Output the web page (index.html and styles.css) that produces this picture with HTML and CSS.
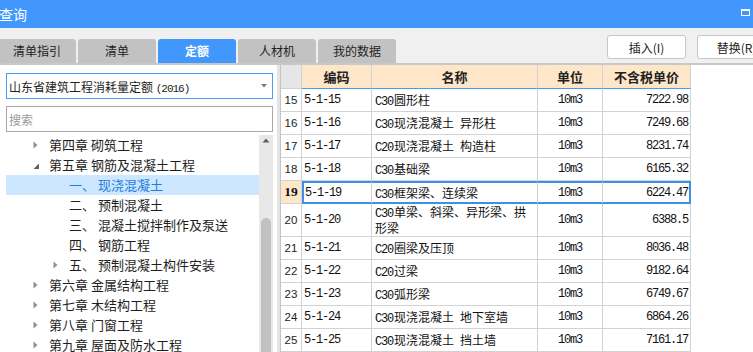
FILE: index.html
```html
<!DOCTYPE html>
<html lang="zh-CN">
<head>
<meta charset="utf-8">
<title>查询</title>
<link rel="stylesheet" href="styles.css">
</head>
<body>
<div class="window">
  <header class="titlebar">
    <span class="title">查询</span>
    <span class="max-icon"></span>
  </header>

  <div class="toolbar">
    <nav class="tabs">
      <span class="tab">清单指引</span>
      <span class="tab">清单</span>
      <span class="tab active">定额</span>
      <span class="tab">人材机</span>
      <span class="tab">我的数据</span>
    </nav>
    <div class="actions">
      <button class="btn">插入(I)</button>
      <button class="btn">替换(R)</button>
    </div>
  </div>

  <main class="content">
    <aside class="sidebar">
      <div class="select">
        <span>山东省建筑工程消耗量定额 <span class="mono small">(2016)</span></span>
        <svg class="caret" width="6" height="4" viewBox="0 0 6 4"><path d="M0 0H6L3 3.5Z" fill="#7d7d7d"/></svg>
      </div>
      <div class="search">搜索</div>
      <div class="tree-wrap">
        <ul class="tree">
          <li class="l1"><span class="tw"><svg width="5" height="8" viewBox="0 0 5 8"><path d="M0.5 0.5L4.5 4L0.5 7.5Z" fill="#8f8f8f"/></svg></span>第四章&nbsp;砌筑工程</li>
          <li class="l1"><span class="tw tw-open"><svg width="7" height="7" viewBox="0 0 7 7"><path d="M6 0.5V6H0.5Z" fill="#5e5e5e"/></svg></span>第五章&nbsp;钢筋及混凝土工程</li>
          <li class="l2 selected"><span class="tw"></span>一、&nbsp;现浇混凝土</li>
          <li class="l2"><span class="tw"></span>二、&nbsp;预制混凝土</li>
          <li class="l2"><span class="tw"></span>三、&nbsp;混凝土搅拌制作及泵送</li>
          <li class="l2"><span class="tw"></span>四、&nbsp;钢筋工程</li>
          <li class="l2"><span class="tw"><svg width="5" height="8" viewBox="0 0 5 8"><path d="M0.5 0.5L4.5 4L0.5 7.5Z" fill="#8f8f8f"/></svg></span>五、&nbsp;预制混凝土构件安装</li>
          <li class="l1"><span class="tw"><svg width="5" height="8" viewBox="0 0 5 8"><path d="M0.5 0.5L4.5 4L0.5 7.5Z" fill="#8f8f8f"/></svg></span>第六章&nbsp;金属结构工程</li>
          <li class="l1"><span class="tw"><svg width="5" height="8" viewBox="0 0 5 8"><path d="M0.5 0.5L4.5 4L0.5 7.5Z" fill="#8f8f8f"/></svg></span>第七章&nbsp;木结构工程</li>
          <li class="l1"><span class="tw"><svg width="5" height="8" viewBox="0 0 5 8"><path d="M0.5 0.5L4.5 4L0.5 7.5Z" fill="#8f8f8f"/></svg></span>第八章&nbsp;门窗工程</li>
          <li class="l1"><span class="tw"><svg width="5" height="8" viewBox="0 0 5 8"><path d="M0.5 0.5L4.5 4L0.5 7.5Z" fill="#8f8f8f"/></svg></span>第九章&nbsp;屋面及防水工程</li>
        </ul>
        <div class="scrollbar">
          <svg class="up" width="8" height="5" viewBox="0 0 8 5"><path d="M0.5 4.5L4 0.5L7.5 4.5Z" fill="#606060"/></svg>
          <span class="thumb"></span>
        </div>
      </div>
    </aside>

    <div class="divider"></div>

    <section class="grid">
      <table>
        <thead>
          <tr>
            <th class="c-no"></th>
            <th class="c-code">编码</th>
            <th class="c-name">名称</th>
            <th class="c-unit">单位</th>
            <th class="c-price">不含税单价</th>
          </tr>
        </thead>
        <tbody>
          <tr><td class="no">15</td><td class="code mono">5-1-15</td><td class="name"><span class="mono">C30</span>圆形柱</td><td class="unit mono">10m3</td><td class="price mono">7222.98</td></tr>
          <tr><td class="no">16</td><td class="code mono">5-1-16</td><td class="name"><span class="mono">C30</span>现浇混凝土&ensp;异形柱</td><td class="unit mono">10m3</td><td class="price mono">7249.68</td></tr>
          <tr><td class="no">17</td><td class="code mono">5-1-17</td><td class="name"><span class="mono">C20</span>现浇混凝土&ensp;构造柱</td><td class="unit mono">10m3</td><td class="price mono">8231.74</td></tr>
          <tr><td class="no">18</td><td class="code mono">5-1-18</td><td class="name"><span class="mono">C30</span>基础梁</td><td class="unit mono">10m3</td><td class="price mono">6165.32</td></tr>
          <tr class="sel"><td class="no">19</td><td class="code mono">5-1-19</td><td class="name"><span class="mono">C30</span>框架梁、连续梁</td><td class="unit mono">10m3</td><td class="price mono">6224.47</td></tr>
          <tr class="tall"><td class="no">20</td><td class="code mono">5-1-20</td><td class="name wrap"><span class="mono">C30</span>单梁、斜梁、异形梁、拱<br>形梁</td><td class="unit mono">10m3</td><td class="price mono">6388.5</td></tr>
          <tr><td class="no">21</td><td class="code mono">5-1-21</td><td class="name"><span class="mono">C20</span>圈梁及压顶</td><td class="unit mono">10m3</td><td class="price mono">8036.48</td></tr>
          <tr><td class="no">22</td><td class="code mono">5-1-22</td><td class="name"><span class="mono">C20</span>过梁</td><td class="unit mono">10m3</td><td class="price mono">9182.64</td></tr>
          <tr><td class="no">23</td><td class="code mono">5-1-23</td><td class="name"><span class="mono">C30</span>弧形梁</td><td class="unit mono">10m3</td><td class="price mono">6749.67</td></tr>
          <tr><td class="no">24</td><td class="code mono">5-1-24</td><td class="name"><span class="mono">C30</span>现浇混凝土&ensp;地下室墙</td><td class="unit mono">10m3</td><td class="price mono">6864.26</td></tr>
          <tr><td class="no">25</td><td class="code mono">5-1-25</td><td class="name"><span class="mono">C30</span>现浇混凝土&ensp;挡土墙</td><td class="unit mono">10m3</td><td class="price mono">7161.17</td></tr>
        </tbody>
      </table>
    </section>
  </main>
</div>
</body>
</html>
```

FILE: styles.css
```css
* { box-sizing: border-box; }

html, body {
  margin: 0;
  padding: 0;
}

body {
  width: 753px;
  height: 352px;
  overflow: hidden;
  background: #fff;
  color: #1e1e1e;
  font-family: "Noto Sans CJK SC", "Noto Sans", sans-serif;
}

.window {
  display: flex;
  flex-direction: column;
  height: 352px;
}

/* title bar */
.titlebar {
  height: 28px;
  flex-shrink: 0;
  background: #4297fd;
  color: #fff;
  display: flex;
  align-items: flex-start;
}

.title {
  font-size: 14px;
  line-height: 28px;
  margin-left: -1px;
}

.max-icon {
  margin-left: auto;
  margin-right: 3px;
  margin-top: 9px;
  width: 9px;
  height: 7px;
  border: 1px solid #fff;
  border-top-width: 2px;
}

/* toolbar with tabs */
.toolbar {
  height: 37px;
  flex-shrink: 0;
  background: #f0f0f0;
  border-bottom: 2px solid #c8c8c8;
  display: flex;
}

.tabs {
  display: flex;
  gap: 2px;
  margin-left: -2px;
  align-self: flex-end;
  flex-shrink: 0;
}

.tab {
  width: 78px;
  height: 24px;
  background: #c2c2c2;
  border-radius: 3px 3px 0 0;
  font-size: 12px;
  line-height: 24px;
  text-align: center;
  color: #222;
}

.tab.active {
  background: #4297fd;
  color: #fff;
  font-weight: bold;
}

.actions {
  display: flex;
  gap: 11px;
  margin-left: 211px;
  padding-top: 7px;
  flex-shrink: 0;
}

.btn {
  width: 79px;
  height: 24px;
  padding: 0;
  background: #fff;
  border: 1px solid #c6c6c6;
  border-radius: 3px;
  font-family: "Noto Sans CJK SC", "Noto Sans", sans-serif;
  font-size: 12px;
  color: #222;
}

/* content */
.content {
  flex: 1;
  min-height: 0;
  display: flex;
}

.sidebar {
  width: 277px;
  flex-shrink: 0;
  padding: 8px 4px 0 6px;
  display: flex;
  flex-direction: column;
}

.select {
  height: 26px;
  flex-shrink: 0;
  border: 1px solid #4b9ef5;
  display: flex;
  align-items: center;
  padding: 0 5px 0 2px;
  font-size: 12px;
  color: #1e1e1e;
}

.caret {
  margin-left: auto;
}

.search {
  margin-top: 7px;
  height: 26px;
  flex-shrink: 0;
  border: 1px solid #a9a9a9;
  display: flex;
  align-items: center;
  padding-left: 2px;
  font-size: 12px;
  color: #9a9a9a;
}

.tree-wrap {
  margin-top: 3px;
  flex: 1;
  min-height: 0;
  display: flex;
}

.tree {
  list-style: none;
  margin: 0;
  padding: 0;
  width: 253px;
  flex-shrink: 0;
  font-size: 13px;
  color: #1e1e1e;
}

.tree li {
  height: 20px;
  line-height: 20px;
  display: flex;
  align-items: center;
  white-space: nowrap;
}

.tree li.l1 { padding-left: 27px; }
.tree li.l2 { padding-left: 47px; }

.tree li.selected {
  background: #cce7ff;
  color: #1f7de0;
}

.tw {
  width: 16px;
  flex-shrink: 0;
  display: flex;
  align-items: center;
}

.tw-open svg {
  margin-top: 3px;
}

.scrollbar {
  width: 14px;
  flex-shrink: 0;
  background: #e8e8e8;
  display: flex;
  flex-direction: column;
  align-items: center;
}

.up {
  margin-top: 3px;
  flex-shrink: 0;
}

.thumb {
  margin-top: 75px;
  width: 10px;
  flex: 1;
  background: #c1c1c1;
  border-radius: 5px 5px 0 0;
}

.divider {
  width: 3px;
  flex-shrink: 0;
  background: #e4e4e4;
}

/* grid */
.grid {
  flex: 1;
}

table {
  border-collapse: separate;
  border-spacing: 0;
  table-layout: fixed;
  width: 411px;
  border-left: 1px solid #c4c4c4;
}

th, td {
  padding: 0;
  height: 23px;
  border-right: 1px solid #d2d2d2;
  border-bottom: 1px solid #d2d2d2;
  white-space: nowrap;
  overflow: hidden;
  vertical-align: middle;
}

th {
  height: 24px;
  background: #fee6c9;
  border-bottom: 1px solid #4a9bf0;
  font-size: 13px;
  font-weight: bold;
  color: #222;
  text-align: center;
}

th.c-no { width: 21px; background: #e6e6e6; border-bottom-color: #d2d2d2; }
th.c-code { width: 70px; }
th.c-name { width: 166px; }
th.c-unit { width: 65px; }
th.c-price { width: 88px; }

.mono {
  font-family: "Liberation Mono", monospace;
  font-size: 12px;
  letter-spacing: -1.2px;
}

.mono.small {
  font-size: 11px;
  letter-spacing: -1px;
}

td {
  font-size: 12px;
  color: #111;
}

td.no {
  text-align: center;
  font-family: "Liberation Sans", sans-serif;
  font-size: 11.5px;
  color: #222;
}

td.code { padding-left: 2px; }
td.name { padding-left: 3px; }
td.name .mono { padding-right: 1px; }
td.name.wrap { white-space: normal; line-height: 14px; }
td.unit { text-align: center; }
td.price { text-align: right; padding-right: 2px; }

tr.tall td { height: 33px; }

tr.sel td.no {
  background: #fee6c9;
  font-family: "Liberation Serif", serif;
  font-weight: bold;
  font-size: 13.5px;
  color: #111;
}

tr.sel td:not(.no) {
  border-top: 2px solid #3d8fe8;
  border-bottom: 2px solid #3d8fe8;
}

tr.sel td.code { border-left: 2px solid #3d8fe8; padding-left: 1px; }
tr.sel td.price { border-right: 2px solid #3d8fe8; padding-right: 1px; }
```
